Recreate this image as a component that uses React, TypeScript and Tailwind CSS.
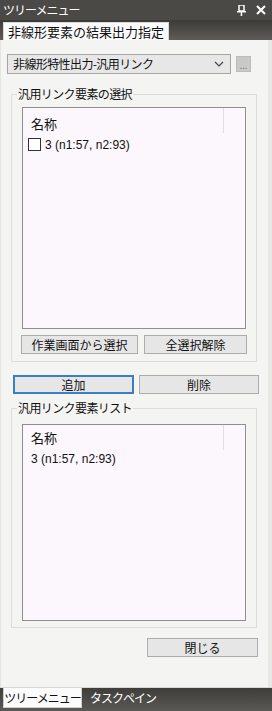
import React from "react";

const font = { fontFamily: '"Noto Sans CJK JP", "Noto Sans", sans-serif' };
const latin = { fontFamily: '"Liberation Sans", "Noto Sans CJK JP", sans-serif' };

function Btn({ label, className = "" }: { label: string; className?: string }) {
  return (
    <div
      className={`h-[19px] flex items-center justify-center bg-[#e6e6e6] border border-[#adadad] text-[12px] text-[#111] leading-none ${className}`}
    >
      {label}
    </div>
  );
}

function Group({ title, children, className = "" }: { title: string; children: React.ReactNode; className?: string }) {
  return (
    <div className={`relative border border-[#dcdcd8] ml-[10px] mr-[11px] ${className}`}>
      <div className="absolute -top-[9px] left-[5px] bg-[#f4f4f2] px-[1px] text-[12px] leading-[16px] tracking-[-0.6px] text-[#111] whitespace-nowrap">
        {title}
      </div>
      {children}
    </div>
  );
}

export default function App() {
  return (
    <div className="w-[272px] h-[711px] flex flex-col overflow-hidden bg-[#f4f4f2] select-none" style={font}>
      {/* title bar */}
      <div className="h-[20px] bg-[#4a4946] flex items-center justify-between pl-[3px] pr-[6px]">
        <span className="text-white text-[12px] tracking-[-1px] leading-none whitespace-nowrap">ツリーメニュー</span>
        <div className="flex items-center gap-[10px]">
          <svg width="9" height="11" viewBox="0 0 9 11">
            <rect x="2" y="0" width="5" height="6" fill="none" stroke="white" strokeWidth="1.5" />
            <rect x="0" y="6" width="9" height="1.5" fill="white" />
            <rect x="3.7" y="7" width="1.5" height="4" fill="white" />
          </svg>
          <svg width="10" height="10" viewBox="0 0 10 10">
            <path d="M1 1 L9 9 M9 1 L1 9" stroke="white" strokeWidth="2" />
          </svg>
        </div>
      </div>
      {/* tab strip */}
      <div className="h-[20px] bg-gradient-to-b from-[#3c3b38] to-[#5d5c58] flex items-end pl-[3px]">
        <div className="h-[18px] bg-[#fbfbfb] px-[4px] flex items-center text-[13px] leading-none text-[#111] border-t border-l border-r border-[#d8d8d8] whitespace-nowrap">
          非線形要素の結果出力指定
        </div>
      </div>
      {/* content */}
      <div className="flex-1 flex flex-col border-r-[4px] border-[#e8e8e5] border-l border-l-[#e4e4e0]">
        {/* dropdown row */}
        <div className="mt-[14px] flex items-center pl-[6px] pr-[17px] gap-[5px]">
          <div className="flex-1 h-[20px] bg-[#e7e7e7] border border-[#a6a6a6] flex items-center justify-between pl-[5px] pr-[6px]">
            <span className="text-[12px] leading-none tracking-[-0.6px] text-[#111] whitespace-nowrap">非線形特性出力-汎用リンク</span>
            <svg width="10" height="6" viewBox="0 0 10 6">
              <path d="M1 1 L5 5 L9 1" stroke="#444" strokeWidth="1.2" fill="none" />
            </svg>
          </div>
          <div className="w-[15px] h-[16px] bg-[#c9c9c9] border border-[#bdbdbd] flex items-end justify-center text-[9px] leading-[10px] text-[#777]">
            ...
          </div>
        </div>

        {/* group 1 */}
        <Group title="汎用リンク要素の選択" className="mt-[20px] pt-[12px] pb-[7px]">
          <div className="mx-[10px] h-[222px] bg-[#fcf7fc] border border-[#8e8e8e] relative">
            <div className="absolute left-[200px] top-0 h-[25px] w-px bg-[#e2dde2]" />
            <div className="pl-[8px] pt-[8px] text-[13px] leading-[16px] text-[#111]">名称</div>
            <div className="flex items-center pl-[5px] mt-[6px] gap-[4px]">
              <div className="w-[13px] h-[13px] border border-[#333] bg-white" />
              <span className="text-[12px] leading-none text-[#111]" style={latin}>
                3 (n1:57, n2:93)
              </span>
            </div>
          </div>
          <div className="flex mx-[9px] mt-[6px] gap-[6px]">
            <Btn label="作業画面から選択" className="w-[117px]" />
            <Btn label="全選択解除" className="flex-1" />
          </div>
        </Group>

        {/* add/delete */}
        <div className="flex mt-[13px] pl-[12px] pr-[9px] gap-[5px]">
          <div className="w-[121px] h-[19px] flex items-center justify-center bg-[#e6e6e6] border-[2px] border-[#3a7fc1] text-[12px] leading-none text-[#111]">
            追加
          </div>
          <Btn label="削除" className="flex-1" />
        </div>

        {/* group 2 */}
        <Group title="汎用リンク要素リスト" className="mt-[14px] pt-[15px] pb-[6px]">
          <div className="mx-[10px] h-[197px] bg-[#fcf7fc] border border-[#8e8e8e] relative">
            <div className="absolute left-[200px] top-0 h-[25px] w-px bg-[#e2dde2]" />
            <div className="pl-[8px] pt-[5px] text-[13px] leading-[16px] text-[#111]">名称</div>
            <div className="pl-[8px] mt-[7px] text-[12px] leading-none text-[#111]" style={latin}>
              3 (n1:57, n2:93)
            </div>
          </div>
        </Group>

        <div className="flex justify-end pr-[10px] mt-[10px]">
          <Btn label="閉じる" className="w-[111px]" />
        </div>
      </div>
      {/* bottom tabs */}
      <div className="h-[24px] bg-gradient-to-b from-[#3f3e3b] to-[#5a5955] flex items-start pl-[3px] border-t border-[#d8d8d4]">
        <div className="h-[20px] w-[79px] bg-[#fbfbfb] border-l border-r border-b border-[#cfcfcf] flex items-center justify-center text-[12px] tracking-[-1px] leading-none text-[#111] whitespace-nowrap">
          ツリーメニュー
        </div>
        <div className="h-[20px] pl-[8px] flex items-center text-[12px] tracking-[-1px] leading-none text-white whitespace-nowrap">タスクペイン</div>
      </div>
    </div>
  );
}
